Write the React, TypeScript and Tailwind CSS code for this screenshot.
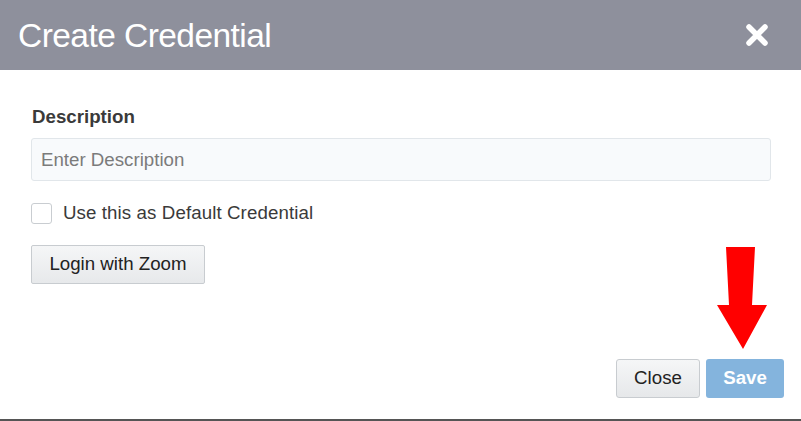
export default function App() {
  return (
    <div
      className="relative flex h-[421px] w-[801px] flex-col overflow-hidden bg-white"
      style={{ fontFamily: '"Liberation Sans", Arial, sans-serif' }}
    >
      {/* header */}
      <div className="flex h-[70px] shrink-0 items-center justify-between bg-[#8e909c] pl-[18px] pr-[33px]">
        <h2 className="mt-[1px] text-[33.5px] leading-none tracking-[-0.55px] text-white">Create Credential</h2>
        <svg width="22" height="22" viewBox="0 0 22 22">
          <path d="M3 3 L19 19 M19 3 L3 19" stroke="#fff" strokeWidth="5.5" strokeLinecap="round" />
        </svg>
      </div>

      {/* body */}
      <div className="flex flex-1 flex-col px-[31px] pt-[36px]">
        <label className="ml-px text-[18.7px] font-bold leading-[22px] text-[#3a3a3a]">Description</label>
        <input
          placeholder="Enter Description"
          className="mt-[10px] h-[43px] w-[740px] rounded-[3px] border border-[#e1e6ea] bg-[#f8fafc] px-[9px] text-[18.7px] text-[#333] outline-none placeholder:text-[#7b7b7b]"
        />
        <label className="mt-[21px] flex items-center gap-[11px]">
          <span className="block h-[21px] w-[21px] rounded-[3px] border border-[#c9cdd1] bg-white" />
          <span className="text-[18.7px] leading-[22px] tracking-[0.1px] text-[#3a3a3a]">Use this as Default Credential</span>
        </label>
        <div className="mt-[21px]">
          <button className="h-[39px] w-[174px] rounded-[2px] border border-[#c8ccd0] bg-gradient-to-b from-[#f5f6f7] to-[#e7e9eb] text-[18.7px] text-[#222]">
            Login with Zoom
          </button>
        </div>
      </div>

      {/* footer */}
      <div className="flex justify-end gap-[6px] pb-[21px] pr-[17px]">
        <button className="h-[39px] w-[84px] rounded-[3px] border border-[#c8ccd0] bg-gradient-to-b from-[#f5f6f7] to-[#e6e8ea] text-[18.7px] text-[#222]">
          Close
        </button>
        <button className="h-[39px] w-[78px] rounded-[3px] bg-[#84b4dd] text-[18.7px] font-bold text-white">
          Save
        </button>
      </div>
      <div className="h-[2px] shrink-0 bg-[#555]" />

      {/* annotation arrow */}
      <svg className="absolute left-[716px] top-[246px]" width="52" height="104" viewBox="0 0 52 104">
        <polygon points="10,1 39,1 36,59 51,59 27,103 1,59 13,59" fill="#ff0000" />
      </svg>
    </div>
  );
}
